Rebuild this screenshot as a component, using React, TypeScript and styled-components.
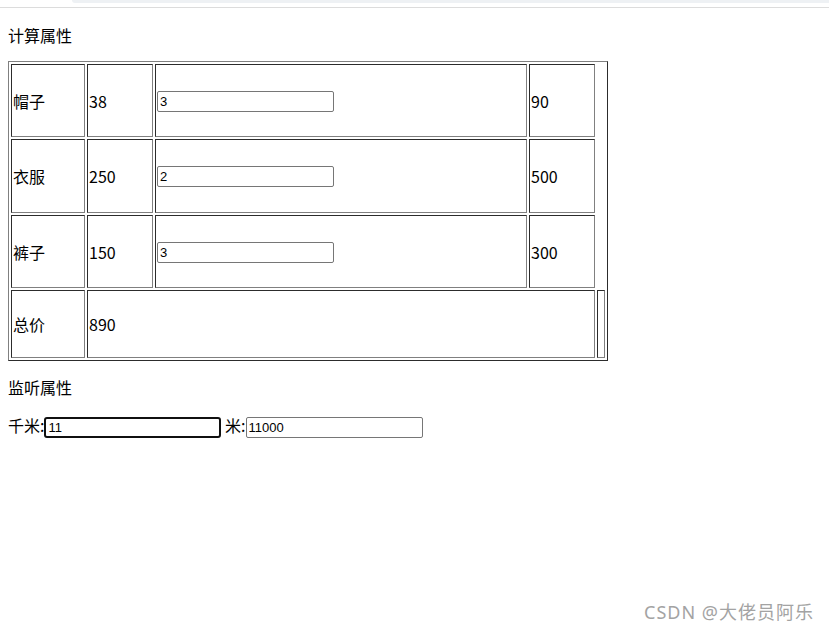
import styled, { createGlobalStyle } from 'styled-components';

const GlobalStyle = createGlobalStyle`
  html, body {
    margin: 0;
    padding: 0;
    background: #fff;
  }
  body {
    font-family: "Microsoft YaHei", "Noto Sans CJK SC", sans-serif;
    font-size: 16px;
    color: #000;
  }
`;

const TopChrome = styled.div`
  height: 7px;
  border-bottom: 1px solid #dcdcdc;
`;

const ChromeBar = styled.div`
  margin-left: 72px;
  height: 3px;
  background: #eef1f4;
  border-bottom-left-radius: 4px;
`;

const Page = styled.div`
  padding: 0 8px;
`;

const SectionTitle = styled.div<{ $top: number }>`
  margin-top: ${(p) => p.$top}px;
  line-height: 22px;
`;

const CartTable = styled.table`
  margin-top: 15px;
  width: 600px;
  border: 1px outset gray;
  border-spacing: 2px;
  border-collapse: separate;
`;

const Cell = styled.td<{ $w?: number; $h: number }>`
  border: 1px inset gray;
  padding: 1px;
  vertical-align: middle;
  ${(p) => (p.$w !== undefined ? `width: ${p.$w}px;` : '')}
  height: ${(p) => p.$h}px;
  line-height: 22px;
`;

const CountInput = styled.input<{ $focused?: boolean }>`
  box-sizing: border-box;
  width: 177px;
  height: 21px;
  margin: 0;
  padding: 1px 2px;
  font-family: "Liberation Sans", Arial, sans-serif;
  font-size: 13px;
  color: #000;
  background: #fff;
  border: ${(p) => (p.$focused ? '2px solid #101010' : '1px solid #767676')};
  border-radius: ${(p) => (p.$focused ? '3px' : '2px')};
  outline: none;
  vertical-align: middle;
`;

const CellInput = styled(CountInput)`
  position: relative;
  top: -1px;
`;

const ConvertRow = styled.div`
  margin-top: 16px;
  line-height: 22px;
`;

const Watermark = styled.div`
  position: absolute;
  right: 15px;
  top: 599px;
  font-family: "Noto Sans", "Noto Sans CJK SC", sans-serif;
  font-size: 18px;
  letter-spacing: 1px;
  color: #a3a3a3;
  line-height: 26px;
`;

const goods = [
  { name: '帽子', price: 38, count: 3, sum: 90, h: 69 },
  { name: '衣服', price: 250, count: 2, sum: 500, h: 70 },
  { name: '裤子', price: 150, count: 3, sum: 300, h: 69 },
];

export default function App() {
  const total = goods.reduce((s, g) => s + g.sum, 0);
  return (
    <>
      <GlobalStyle />
      <TopChrome>
        <ChromeBar />
      </TopChrome>
      <Page>
        <SectionTitle $top={16}>计算属性</SectionTitle>
        <CartTable>
          <tbody>
            {goods.map((g, i) => (
              <tr key={g.name}>
                <Cell $w={i === 0 ? 70 : undefined} $h={g.h}>{g.name}</Cell>
                <Cell $w={i === 0 ? 62 : undefined} $h={g.h}>{g.price}</Cell>
                <Cell $w={i === 0 ? 368 : undefined} $h={g.h}>
                  <CellInput type="text" defaultValue={g.count} />
                </Cell>
                <Cell $w={i === 0 ? 62 : undefined} $h={g.h}>{g.sum}</Cell>
              </tr>
            ))}
            <tr>
              <Cell $h={64}>总价</Cell>
              <Cell colSpan={3} $h={64}>{total}</Cell>
              <Cell $w={4} $h={64}></Cell>
            </tr>
          </tbody>
        </CartTable>
        <SectionTitle $top={15}>监听属性</SectionTitle>
        <ConvertRow>
          千米:<CountInput type="text" defaultValue="11" $focused /> 米:<CountInput type="text" defaultValue="11000" />
        </ConvertRow>
      </Page>
      <Watermark>CSDN @大佬员阿乐</Watermark>
    </>
  );
}
